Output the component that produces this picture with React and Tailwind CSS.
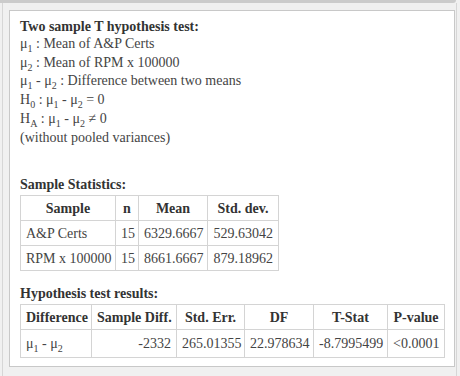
const Sub = ({ children }) => (
  <span className="relative top-[4px] text-[10px] leading-none">{children}</span>
);

const Mu = ({ n }) => (
  <>
    μ<Sub>{n}</Sub>
  </>
);

const Diff = () => (
  <>
    <Mu n="1" /> - <Mu n="2" />
  </>
);

const SAMPLE_ROWS = [
  { name: "A&P Certs", n: "15", mean: "6329.6667", sd: "529.63042" },
  { name: "RPM x 100000", n: "15", mean: "8661.6667", sd: "879.18962" },
];

const th = "border border-[#d4d4d4] px-[5px] font-bold text-center text-[#333]";
const td = "border border-[#d4d4d4] px-[5px] text-[#444]";

const App = () => {
  return (
    <div className="w-[460px] h-[376px] bg-[#f0f0f0] flex flex-col overflow-hidden font-['Liberation_Serif',serif] text-[14px] text-[#444]">
      {/* top strip */}
      <div className="h-[3px] bg-[#cbcbcb] mr-[4px] rounded-br-[3px] shrink-0" />

      <div className="flex-1 ml-[2px] mr-[3px] border-l border-r border-[#d6d6d6] pt-[7px] pl-[6px]">
        <div className="w-[446px] h-[357px] bg-white border border-[#c8c8c8] pl-[10px] pt-[8px]">
          <div className="font-bold text-[#333] leading-[16px]">Two sample T hypothesis test:</div>
          <div className="leading-[18.7px]">
            <div>
              <Mu n="1" /> : Mean of A&amp;P Certs
            </div>
            <div>
              <Mu n="2" /> : Mean of RPM x 100000
            </div>
            <div>
              <Diff /> : Difference between two means
            </div>
            <div>
              H<Sub>0</Sub> : <Diff /> = 0
            </div>
            <div>
              H<Sub>A</Sub> : <Diff /> ≠ 0
            </div>
            <div>(without pooled variances)</div>
          </div>

          {/* Sample statistics */}
          <div className="mt-[30px] font-bold text-[#333] leading-[16px]">Sample Statistics:</div>
          <table className="mt-[2px] w-[258px] table-fixed border-collapse">
            <colgroup>
              <col className="w-[95px]" />
              <col className="w-[23px]" />
              <col className="w-[69px]" />
              <col className="w-[71px]" />
            </colgroup>
            <thead>
              <tr className="h-[25px]">
                <th className={th}>Sample</th>
                <th className={th}>n</th>
                <th className={th}>Mean</th>
                <th className={th}>Std. dev.</th>
              </tr>
            </thead>
            <tbody>
              {SAMPLE_ROWS.map((r) => (
                <tr key={r.name} className="h-[25px]">
                  <td className={`${td} whitespace-nowrap`}>{r.name}</td>
                  <td className={`${td} text-right`}>{r.n}</td>
                  <td className={`${td} text-right`}>{r.mean}</td>
                  <td className={`${td} text-right`}>{r.sd}</td>
                </tr>
              ))}
            </tbody>
          </table>

          {/* Hypothesis test results */}
          <div className="mt-[15px] font-bold text-[#333] leading-[16px]">Hypothesis test results:</div>
          <table className="mt-[2px] w-[424px] table-fixed border-collapse">
            <colgroup>
              <col className="w-[71px]" />
              <col className="w-[85px]" />
              <col className="w-[68px]" />
              <col className="w-[69px]" />
              <col className="w-[74px]" />
              <col className="w-[57px]" />
            </colgroup>
            <thead>
              <tr className="h-[25px]">
                <th className={`${th} whitespace-nowrap`}>Difference</th>
                <th className={`${th} whitespace-nowrap`}>Sample Diff.</th>
                <th className={th}>Std. Err.</th>
                <th className={th}>DF</th>
                <th className={th}>T-Stat</th>
                <th className={th}>P-value</th>
              </tr>
            </thead>
            <tbody>
              <tr className="h-[28px]">
                <td className={`${td} whitespace-nowrap`}>
                  <Diff />
                </td>
                <td className={`${td} text-right`}>-2332</td>
                <td className={`${td} text-right`}>265.01355</td>
                <td className={`${td} text-right`}>22.978634</td>
                <td className={`${td} text-right`}>-8.7995499</td>
                <td className={`${td} text-right`}>&lt;0.0001</td>
              </tr>
            </tbody>
          </table>
        </div>
      </div>
    </div>
  );
};

export default App;
